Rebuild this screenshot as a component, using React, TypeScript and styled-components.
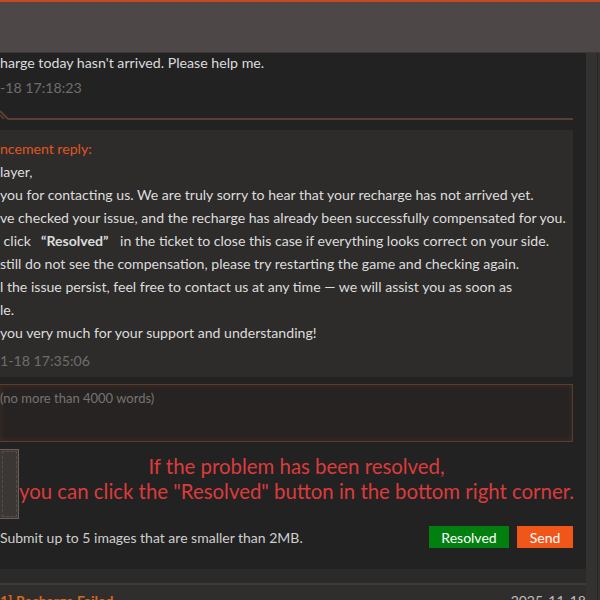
import styled, { createGlobalStyle } from 'styled-components';

const Global = createGlobalStyle`
  html, body {
    margin: 0;
    padding: 0;
    background: #232222;
  }
  body {
    font-family: Lato, "Liberation Sans", sans-serif;
    font-size: 14px;
    color: #dcdcdc;
  }
`;

const Page = styled.div`
  width: 600px;
  height: 600px;
  overflow: hidden;
  display: flex;
  flex-direction: column;
`;

const TopBar = styled.header`
  height: 50px;
  border-top: 2px solid #c9471c;
  background: #4d4847;
  border-bottom: 1px solid #3a3736;
  flex-shrink: 0;
`;

const Body = styled.div`
  flex: 1;
  display: flex;
`;

const Main = styled.main`
  width: 586px;
  display: flex;
  flex-direction: column;
`;

const ScrollTrack = styled.div`
  flex: 1;
  background: #343231;
  border-right: 2px solid #343231;
  box-shadow: inset -1px 0 0 #282625;
`;

const Thread = styled.section`
  background: #232222;
  padding: 0 13px 21px 0;
  display: flex;
  flex-direction: column;
`;

const Message = styled.p`
  margin: 0;
  line-height: 20px;
  font-size: 14.2px;
  white-space: nowrap;
`;

const Stamp = styled.div<{ $gap?: number }>`
  margin-top: ${(p) => p.$gap ?? 5}px;
  line-height: 20px;
  font-size: 14.2px;
  color: #6f6d6c;
  white-space: nowrap;
`;

const Divider = styled.svg`
  display: block;
  margin-top: 8px;
  width: 100%;
  height: 16px;
  overflow: visible;
`;

const ReplyBox = styled.div`
  margin-top: 8px;
  background: #2e2c2b;
  padding: 7px 0 6px;
  font-size: 14.1px;
`;

const ReplyTitle = styled.div`
  color: #e0561e;
  line-height: 23px;
  white-space: nowrap;
`;

const ReplyLine = styled.div`
  line-height: 23px;
  white-space: nowrap;
`;

const Strong = styled.b`
  font-weight: 700;
  margin: 0 8px 0 10px;
`;

const ReplyInput = styled.div`
  margin-top: 7px;
  height: 52px;
  background: #262322;
  border: 1px solid #5c3c2c;
  border-left: none;
  box-shadow: inset 0 0 6px rgba(120, 70, 40, 0.35);
  padding: 4px 0 0;
  font-size: 13px;
  line-height: 18px;
  color: #777372;
  white-space: nowrap;
`;

const UploadRow = styled.div`
  margin-top: 7px;
  display: flex;
  height: 70px;
`;

const UploadBox = styled.div`
  width: 18px;
  height: 68px;
  background: #3b3734;
  border: 1px solid #6e6058;
  border-left: none;
  outline: 1px dashed #5a4c44;
  outline-offset: -3px;
  flex-shrink: 0;
`;

const Hint = styled.div`
  flex: 1;
  padding-top: 5px;
  text-align: center;
  color: #dc3b3b;
  font-size: 20.4px;
  line-height: 25px;
  white-space: nowrap;
`;

const FooterRow = styled.div`
  margin-top: 7px;
  display: flex;
  align-items: center;
  gap: 8px;
  height: 22px;
`;

const Note = styled.span`
  flex: 1;
  color: #cfcfcf;
  white-space: nowrap;
`;

const Button = styled.button<{ $bg: string; $w: number }>`
  width: ${(p) => p.$w}px;
  height: 22px;
  border: none;
  padding: 0;
  background: ${(p) => p.$bg};
  color: #fff;
  font-family: inherit;
  font-size: 14px;
`;

const ListStrip = styled.div`
  flex: 1;
  background: #302e2d;
  border-top: 14px solid #2b2a29;
  box-shadow: inset 0 2px 0 #3d3b3a;
`;

const ListItem = styled.div`
  display: flex;
  justify-content: space-between;
  padding: 8px 0 0 0;
  line-height: 20px;
  white-space: nowrap;
`;

const ItemTitle = styled.span`
  color: #d4691e;
  font-weight: 700;
`;

const ItemDate = styled.span`
  color: #bdbdbd;
`;

export default function App(): JSX.Element {
  return (
    <Page>
      <Global />
      <TopBar />
      <Body>
        <Main>
          <Thread>
            <Message>harge today hasn't arrived. Please help me.</Message>
            <Stamp>-18 17:18:23</Stamp>
            <Divider viewBox="0 0 573 16" preserveAspectRatio="none">
              <path d="M0 5 L8 13 H573" stroke="#5a3e32" strokeWidth="2" fill="none" />
              <path d="M0 9 L4 13" stroke="#5a3e32" strokeWidth="1.5" fill="none" />
            </Divider>
            <ReplyBox>
              <ReplyTitle>ncement reply:</ReplyTitle>
              <ReplyLine>layer,</ReplyLine>
              <ReplyLine>
                you for contacting us. We are truly sorry to hear that your recharge has not arrived yet.
              </ReplyLine>
              <ReplyLine>
                ve checked your issue, and the recharge has already been successfully compensated for you.
              </ReplyLine>
              <ReplyLine>
                &nbsp;click<Strong>“Resolved”</Strong> in the ticket to close this case if everything
                looks correct on your side.
              </ReplyLine>
              <ReplyLine>
                still do not see the compensation, please try restarting the game and checking again.
              </ReplyLine>
              <ReplyLine>
                l the issue persist, feel free to contact us at any time — we will assist you as soon as
              </ReplyLine>
              <ReplyLine>le.</ReplyLine>
              <ReplyLine>you very much for your support and understanding!</ReplyLine>
              <Stamp $gap={7}>1-18 17:35:06</Stamp>
            </ReplyBox>
            <ReplyInput>(no more than 4000 words)</ReplyInput>
            <UploadRow>
              <UploadBox />
              <Hint>
                If the problem has been resolved,
                <br />
                you can click the "Resolved" button in the bottom right corner.
              </Hint>
            </UploadRow>
            <FooterRow>
              <Note>Submit up to 5 images that are smaller than 2MB.</Note>
              <Button $bg="#01800f" $w={80}>Resolved</Button>
              <Button $bg="#f0561a" $w={56}>Send</Button>
            </FooterRow>
          </Thread>
          <ListStrip>
            <ListItem>
              <ItemTitle>1] Recharge Failed</ItemTitle>
              <ItemDate>2025-11-18</ItemDate>
            </ListItem>
          </ListStrip>
        </Main>
        <ScrollTrack />
      </Body>
    </Page>
  );
}
